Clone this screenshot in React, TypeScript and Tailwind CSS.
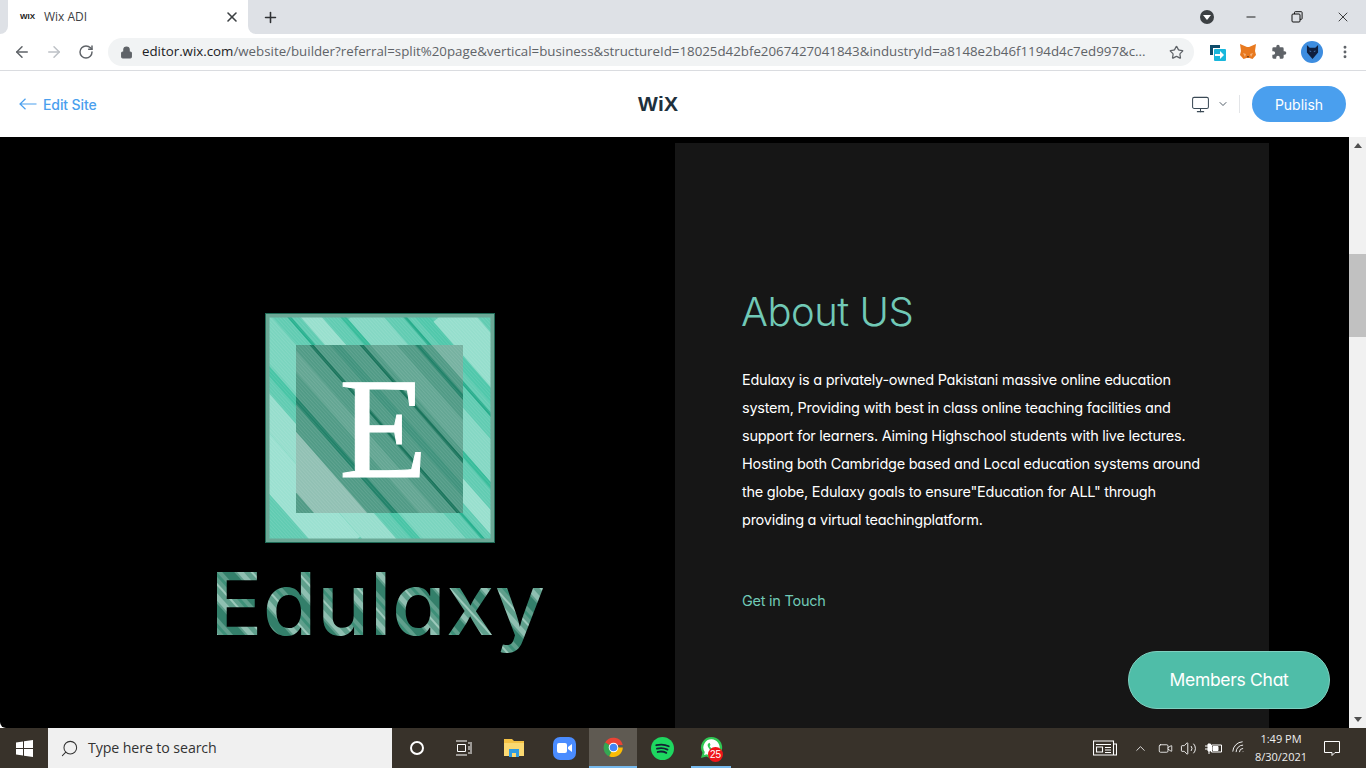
import React from 'react';
import {
  ArrowLeft, ArrowRight, RotateCw, Lock, Star, MoreVertical, X, Plus, Minus,
  Monitor, ChevronDown, ChevronUp, Search, Video, Volume2, Wifi,
} from 'lucide-react';

const bodyLines = [
  'Edulaxy is a privately-owned Pakistani massive online education',
  'system, Providing with best in class online teaching facilities and',
  'support for learners. Aiming Highschool students with live lectures.',
  'Hosting both Cambridge based and Local education systems around',
  'the globe, Edulaxy goals to ensure"Education for ALL" through',
  'providing a virtual teachingplatform.',
];

const TabStrip = () => (
  <div className="flex h-[34px] shrink-0 bg-white">
    <div className="w-2 bg-[#dee1e6] rounded-br-lg" />
    <div className="w-[240px] flex items-center bg-white rounded-t-lg pl-3 pr-2">
      <span className="w-[16px] text-[8px] font-black leading-none text-[#222] font-['Liberation_Sans',sans-serif]">WIX</span>
      <span className="ml-2 flex-1 text-[12px] text-[#3c4043] font-['Open_Sans',sans-serif]">Wix ADI</span>
      <X className="w-4 h-4 text-[#3c4043]" strokeWidth={2.4} />
    </div>
    <div className="flex-1 flex items-center bg-[#dee1e6] rounded-bl-lg">
      <Plus className="ml-[14px] w-[17px] h-[17px] text-[#2f3134]" strokeWidth={2.2} />
      <div className="flex-1" />
      <div className="mr-[14px] w-[14px] h-[14px] rounded-full bg-[#3c4043] flex items-center justify-center">
        <div className="w-0 h-0 border-l-[4px] border-r-[4px] border-t-[5px] border-l-transparent border-r-transparent border-t-white" />
      </div>
      <div className="w-[46px] flex justify-center"><Minus className="w-[14px] h-[14px] text-[#111]" strokeWidth={1.6} /></div>
      <div className="w-[46px] flex justify-center">
        <svg width="12" height="12" viewBox="0 0 12 12" fill="none" stroke="#111" strokeWidth="1">
          <rect x="1" y="3" width="8" height="8" rx="1" />
          <path d="M3.5 3V1.5a.8.8 0 0 1 .8-.8h6a.8.8 0 0 1 .8.8v6a.8.8 0 0 1-.8.8H9" />
        </svg>
      </div>
      <div className="w-[46px] flex justify-center"><X className="w-[16px] h-[16px] text-[#111]" strokeWidth={1.2} /></div>
    </div>
  </div>
);

const Toolbar = () => (
  <div className="flex items-center h-[37px] shrink-0 bg-white border-b border-[#dadce0]">
    <div className="pl-[6px] w-[38px] flex justify-center"><ArrowLeft className="w-[18px] h-[18px] text-[#5f6368]" strokeWidth={2} /></div>
    <div className="w-8 flex justify-center"><ArrowRight className="w-[18px] h-[18px] text-[#bdc1c6]" strokeWidth={2} /></div>
    <div className="w-8 flex justify-center"><RotateCw className="w-[16px] h-[16px] text-[#5f6368]" strokeWidth={2.2} /></div>
    <div className="ml-[6px] w-[1086px] h-[28px] rounded-full bg-[#f1f3f4] flex items-center pl-[12px] pr-[10px]">
      <Lock className="w-[13px] h-[13px] text-[#5f6368] fill-[#5f6368]" strokeWidth={2} />
      <span className="ml-[9px] flex-1 whitespace-nowrap overflow-hidden text-[13.3px] text-[#5f6368] font-['Open_Sans',sans-serif]">
        <span className="text-[#202124]">editor.wix.com</span>/website/builder?referral=split%20page&amp;vertical=business&amp;structureId=18025d42bfe2067427041843&amp;industryId=a8148e2b46f1194d4c7ed997&amp;c...
      </span>
      <Star className="w-[15px] h-[15px] text-[#5f6368]" strokeWidth={2} />
    </div>
    <div className="ml-[15px] w-[17px] h-[17px]">
      <svg width="17" height="17" viewBox="0 0 17 17">
        <path d="M1 1h10v3H4v7H1z" fill="#0f4c6a" />
        <rect x="5" y="5" width="12" height="12" rx="1" fill="#19b7dc" />
        <path d="M6 10h5V7l4 4-4 4v-3H6z" fill="#fff" />
      </svg>
    </div>
    <div className="ml-[13px] w-[18px] h-[18px]">
      <svg width="18" height="18" viewBox="0 0 18 18">
        <path d="M1 1l7 3h2l7-3-1 7 1 4-3.500 4-3-1H7.500l-3 1L1 12l1-4z" fill="#e8791f" />
        <path d="M4 10l3 1-1 3zM14 10l-3 1 1 3z" fill="#f5b27a" />
        <path d="M8 13h2l-1 2z" fill="#5a3a20" />
      </svg>
    </div>
    <div className="ml-[14px] w-[16px] h-[16px]">
      <svg width="16" height="16" viewBox="0 0 24 24" fill="#5f6368">
        <path d="M20.5 11H19V7a2 2 0 0 0-2-2h-4V3.5a2.5 2.5 0 0 0-5 0V5H4a2 2 0 0 0-2 2v3.800h1.500a2.700 2.700 0 0 1 0 5.400H2V20a2 2 0 0 0 2 2h3.800v-1.500a2.700 2.700 0 0 1 5.400 0V22H17a2 2 0 0 0 2-2v-4h1.500a2.500 2.500 0 0 0 0-5z" />
      </svg>
    </div>
    <div className="ml-[14px] w-[22px] h-[22px] rounded-full bg-[#3d8de0] flex items-center justify-center">
      <svg width="13" height="14" viewBox="0 0 14 15">
        <path d="M1 0l3 3h6l3-3v8l-6 7-6-7z" fill="#0f1f3f" />
        <path d="M4 6l2 1H4zM10 6L8 7h2z" fill="#6ab0ff" />
      </svg>
    </div>
    <div className="ml-[10px] w-[24px] flex justify-center"><MoreVertical className="w-[16px] h-[16px] text-[#5f6368]" strokeWidth={2.4} /></div>
  </div>
);

const WixHeader = () => (
  <div className="flex items-center h-[66px] shrink-0 bg-white pl-[19px] pr-[20px]">
    <div className="w-[619px] flex items-center text-[#4a9fee]">
      <svg width="18" height="12" viewBox="0 0 18 12" fill="none" stroke="#4a9fee" strokeWidth="1.2">
        <path d="M17.5 6H1M6.500.8L1 6l5.500 5.200" />
      </svg>
      <span className="ml-[6px] text-[14px] font-['Inter',sans-serif] font-medium tracking-[-0.1px]">Edit Site</span>
    </div>
    <span className="-mt-[2px] text-[21px] leading-none font-bold text-[#20303c] tracking-[0.3px] font-['Liberation_Sans',sans-serif]">WiX</span>
    <div className="flex-1 flex items-center justify-end">
      <Monitor className="w-[19px] h-[19px] text-[#3b4a56]" strokeWidth={1.3} />
      <ChevronDown className="ml-[7px] w-[12px] h-[12px] text-[#3b4a56]" strokeWidth={1.8} />
      <div className="ml-[10px] w-px h-[18px] bg-[#e3e5e8]" />
      <div className="ml-[12px] w-[94px] h-[36px] rounded-full bg-[#4a9fee] flex items-center justify-center text-white text-[14px] font-['Inter',sans-serif]">Publish</div>
    </div>
  </div>
);

// position along the top edge, width, colour, opacity
const outerBands: [number, number, string, number][] = [
  [24, 26, '#9be0cf', 0.9], [62, 9, '#3cc2a1', 0.7], [88, 34, '#8bdac7', 0.6], [128, 3, '#1fae8b', 0.9],
  [150, 16, '#a6e4d5', 0.8], [182, 5, '#2cb995', 0.8], [204, 28, '#93ddcb', 0.7], [244, 3, '#1fa987', 0.9],
  [262, 12, '#47c6a8', 0.7], [292, 36, '#a2e3d3', 0.8], [340, 5, '#2cb995', 0.8], [-20, 40, '#a9e6d8', 0.8],
];
const innerBands: [number, number, string, number][] = [
  [8, 40, '#98c5b8', 0.9], [62, 5, '#1c7f65', 0.9], [96, 14, '#6fad9b', 0.6], [126, 3, '#126f56', 0.9],
  [150, 8, '#3c917a', 0.8], [176, 3, '#126f56', 0.9], [198, 20, '#76b3a2', 0.5], [232, 4, '#1c7f65', 0.9],
  [262, 24, '#86bbac', 0.7], [300, 3, '#126f56', 0.9],
];

const Logo = () => (
  <svg width="338" height="352" viewBox="-6 0 338 352">
    <defs>
      <pattern id="grain" width="2.500" height="2.500" patternUnits="userSpaceOnUse" patternTransform="rotate(-42)">
        <rect width="1" height="2.500" fill="#ffffff" opacity="0.1" />
      </pattern>
      <pattern id="type" width="34" height="34" patternUnits="userSpaceOnUse" patternTransform="rotate(-42)">
        <rect width="34" height="34" fill="#5f9f8c" />
        <rect width="9" height="34" fill="#337f6a" />
        <rect x="11" width="5" height="34" fill="#8fbfb1" />
        <rect x="21" width="2" height="34" fill="#9cc9bb" />
        <rect x="27" width="3" height="34" fill="#3d8f78" />
      </pattern>
      <clipPath id="outerClip"><rect x="50" y="3" width="230" height="230" /></clipPath>
      <clipPath id="innerClip"><rect x="81" y="35" width="167" height="168" /></clipPath>
    </defs>
    <g clipPath="url(#outerClip)">
      <rect x="50" y="3" width="230" height="230" fill="#5fcbb1" />
      {outerBands.map(([x, w, c, o]) => (
        <line key={x} x1={x - 60} y1="0" x2={x + 150} y2="240" stroke={c} strokeWidth={w} opacity={o} />
      ))}
      <rect x="50" y="3" width="230" height="230" fill="url(#grain)" />
      <rect x="52" y="5" width="226" height="226" fill="none" stroke="#6ba896" strokeWidth="5" />
      <rect x="50.500" y="3.500" width="229" height="229" fill="none" stroke="#1f6b57" strokeWidth="1" />
    </g>
    <g clipPath="url(#innerClip)">
      <rect x="81" y="35" width="167" height="168" fill="#4f9a85" />
      {innerBands.map(([x, w, c, o]) => (
        <line key={x} x1={x - 60} y1="0" x2={x + 150} y2="240" stroke={c} strokeWidth={w} opacity={o} />
      ))}
      <rect x="81" y="35" width="167" height="168" fill="url(#grain)" />
    </g>
    <text x="124" y="167" fill="#ffffff" fontSize="145" stroke="#ffffff" strokeWidth="1" className="font-['Liberation_Serif',serif]">E</text>
    <text x="-5" y="325" fill="url(#type)" fontSize="87" textLength="335" lengthAdjust="spacing" className="font-['Inter',sans-serif] font-medium [font-feature-settings:'cv11']">Edulaxy</text>
  </svg>
);

const Page = () => (
  <div className="relative flex-1 flex min-h-0 bg-white">
    <div className="flex-1 flex bg-black overflow-hidden rounded-bl-[6px] pt-[6px]">
      <div className="w-[675px] shrink-0 pl-[209px] pt-[167px]">
        <Logo />
      </div>
      <div className="w-[594px] shrink-0 bg-[#161616] pl-[67px] pt-[145px] font-['Inter',sans-serif] [font-feature-settings:'cv11']">
        <h2 className="-ml-px text-[40px] leading-[48px] font-light tracking-[-0.5px] text-[#71c9b6]">About US</h2>
        <div className="mt-[30px] text-[14.5px] leading-[28px] tracking-[-0.25px] text-white">
          {bodyLines.map((line) => (
            <div key={line} className="whitespace-nowrap">{line}</div>
          ))}
        </div>
        <div className="mt-[55px] text-[14.5px] leading-[24px] tracking-[-0.25px] text-[#71c9b6]">Get in Touch</div>
      </div>
      <div className="w-[80px] shrink-0" />
    </div>
    <div className="w-[17px] shrink-0 bg-[#f1f1f1] flex flex-col items-center">
      <div className="mt-[6px] w-0 h-0 border-l-[4px] border-r-[4px] border-b-[5px] border-l-transparent border-r-transparent border-b-[#505050]" />
      <div className="mt-[106px] w-full h-[83px] bg-[#c1c1c1]" />
      <div className="flex-1" />
      <div className="mb-[6px] w-0 h-0 border-l-[4px] border-r-[4px] border-t-[5px] border-l-transparent border-r-transparent border-t-[#505050]" />
    </div>
    <div className="absolute left-[1128px] top-[514px] w-[202px] h-[58px] rounded-full bg-[#4fbda8] border border-[#7fd0c0] flex items-center justify-center text-white text-[17.5px] tracking-[-0.3px] font-['Inter',sans-serif] [font-feature-settings:'cv11']">
      Members Chat
    </div>
  </div>
);

const Taskbar = () => (
  <div className="flex items-center h-[40px] shrink-0 bg-[#38322a] text-white">
    <div className="w-[48px] flex justify-center">
      <svg width="17" height="17" viewBox="0 0 17 17" fill="#fff">
        <path d="M0 2.400l7-1v6.600H0zM8 1.200L17 0v8H8zM0 9h7v6.600l-7-1zM8 9h9v8l-9-1.200z" />
      </svg>
    </div>
    <div className="w-[344px] h-full bg-[#f0f0f0] flex items-center pl-[12px] text-[#333]">
      <Search className="w-[19px] h-[19px] -scale-x-100" strokeWidth={1.3} />
      <span className="ml-[9px] text-[14.2px] font-['Open_Sans',sans-serif] tracking-[-0.1px]">Type here to search</span>
    </div>
    <div className="w-[50px] flex justify-center">
      <div className="w-[14px] h-[14px] rounded-full border-2 border-white" />
    </div>
    <div className="w-[44px] flex justify-center">
      <svg width="16" height="16" viewBox="0 0 16 16" fill="none" stroke="#fff" strokeWidth="1">
        <path d="M0 1h11M0 15h11M1.500 4.500h8v7h-8zM13 2v2M13 6v4M13 12v2M15 2v12" />
      </svg>
    </div>
    <div className="ml-[3px] w-[50px] flex justify-center">
      <svg width="22" height="20" viewBox="0 0 22 20">
        <path d="M1 1h8l2 2h10v15H1z" fill="#f5c244" />
        <rect x="1" y="5" width="20" height="13" fill="#fbd971" />
        <rect x="6" y="11" width="10" height="8" fill="#2f9be0" />
        <rect x="9" y="15" width="4" height="4" fill="#fbd971" />
      </svg>
    </div>
    <div className="w-[50px] flex justify-center">
      <div className="w-[23px] h-[23px] rounded-[7px] bg-[#4a8cff] flex items-center justify-center">
        <svg width="15" height="10" viewBox="0 0 15 10" fill="#fff">
          <rect width="10" height="10" rx="2" />
          <path d="M11 4l4-3v8l-4-3z" />
        </svg>
      </div>
    </div>
    <div className="w-[48px] h-full bg-[#5f5a52] border-b-2 border-[#76b9ed] flex items-center justify-center">
      <svg width="23" height="23" viewBox="0 0 24 24">
        <path d="M12 12L3.200 6.900A10 10 0 0 1 21.700 9.500H12z" fill="#ea4335" />
        <path d="M12 12l-4.500 9.200A10 10 0 0 1 3.200 6.900z" fill="#34a853" />
        <path d="M12 12h9.700A10 10 0 0 1 7.500 21z" fill="#fbbc05" />
        <circle cx="12" cy="12" r="5" fill="#fff" />
        <circle cx="12" cy="12" r="4" fill="#4285f4" />
      </svg>
    </div>
    <div className="w-[50px] flex justify-center">
      <svg width="23" height="23" viewBox="0 0 24 24">
        <circle cx="12" cy="12" r="12" fill="#1ed760" />
        <path d="M5.500 8.600c4.500-1.200 9-.9 13 1.100M6.200 12.200c3.800-1 7.600-.7 11 1M7 15.600c3.200-.8 6.200-.5 9 .9" fill="none" stroke="#123" strokeWidth="1.900" strokeLinecap="round" />
      </svg>
    </div>
    <div className="relative ml-[4px] w-[40px] h-full flex items-center justify-center border-b-2 border-[#76b9ed]">
      <svg width="23" height="23" viewBox="0 0 24 24">
        <path d="M12 1a11 11 0 0 0-9.400 16.600L1 23l5.600-1.500A11 11 0 1 0 12 1z" fill="#2fc653" />
        <path d="M12 3.500a8.500 8.500 0 0 0-7 13.300l-.8 3 3-.8A8.500 8.500 0 1 0 12 3.500z" fill="#fff" />
        <path d="M9 7.500c-1.500 1-1.500 3 .5 5.500s4.500 3.500 6 2.500l.5-2-2-1-1 1c-1-.3-2.500-1.800-3-3l1-1-1-2.500z" fill="#2fc653" />
      </svg>
      <span className="absolute left-[17px] top-[19px] w-[15px] h-[15px] rounded-full bg-[#f01419] flex items-center justify-center text-[10px] leading-none text-white font-['Liberation_Sans',sans-serif]">25</span>
    </div>
    <div className="flex-1" />
    <div className="flex items-center pr-[26px]">
      <svg width="24" height="16" viewBox="0 0 24 16" fill="none" stroke="#fff" strokeWidth="1.100">
        <path d="M.5 1h20v14H.5zM20.500 4h3v11h-3M3 4.500h15M3.500 7h6v5h-6zM12 7.500h6M12 10h6M12 12.500h6" />
      </svg>
      <ChevronUp className="ml-[16px] w-[15px] h-[15px]" strokeWidth={1.3} />
      <Video className="ml-[10px] w-[15px] h-[15px]" strokeWidth={1.3} />
      <Volume2 className="ml-[7px] w-[17px] h-[17px]" strokeWidth={1.3} />
      <svg className="ml-[8px]" width="17" height="13" viewBox="0 0 17 13" fill="none" stroke="#fff" strokeWidth="1">
        <path d="M6.500 3h10v7h-10z" />
        <path d="M8 4.500h5v4H8zM0 4h3M0 7h3M3 2v7h2.500V2zM4 9v3" fill="#fff" />
      </svg>
      <Wifi className="ml-[9px] w-[16px] h-[16px] -rotate-45" strokeWidth={1.3} />
      <div className="ml-[4px] w-[60px] text-center text-[11px] leading-[18px] text-[#eee] font-['Open_Sans',sans-serif]">
        <div>1:49 PM</div>
        <div>8/30/2021</div>
      </div>
      <svg className="ml-[13px]" width="16" height="15" viewBox="0 0 16 15" fill="none" stroke="#fff" strokeWidth="1">
        <path d="M.5.500h15v11h-4.500l-3 3v-3H.5z" />
      </svg>
    </div>
  </div>
);

export default function App() {
  return (
    <div className="w-[1366px] h-[768px] flex flex-col overflow-hidden bg-white">
      <TabStrip />
      <Toolbar />
      <WixHeader />
      <Page />
      <Taskbar />
    </div>
  );
}
